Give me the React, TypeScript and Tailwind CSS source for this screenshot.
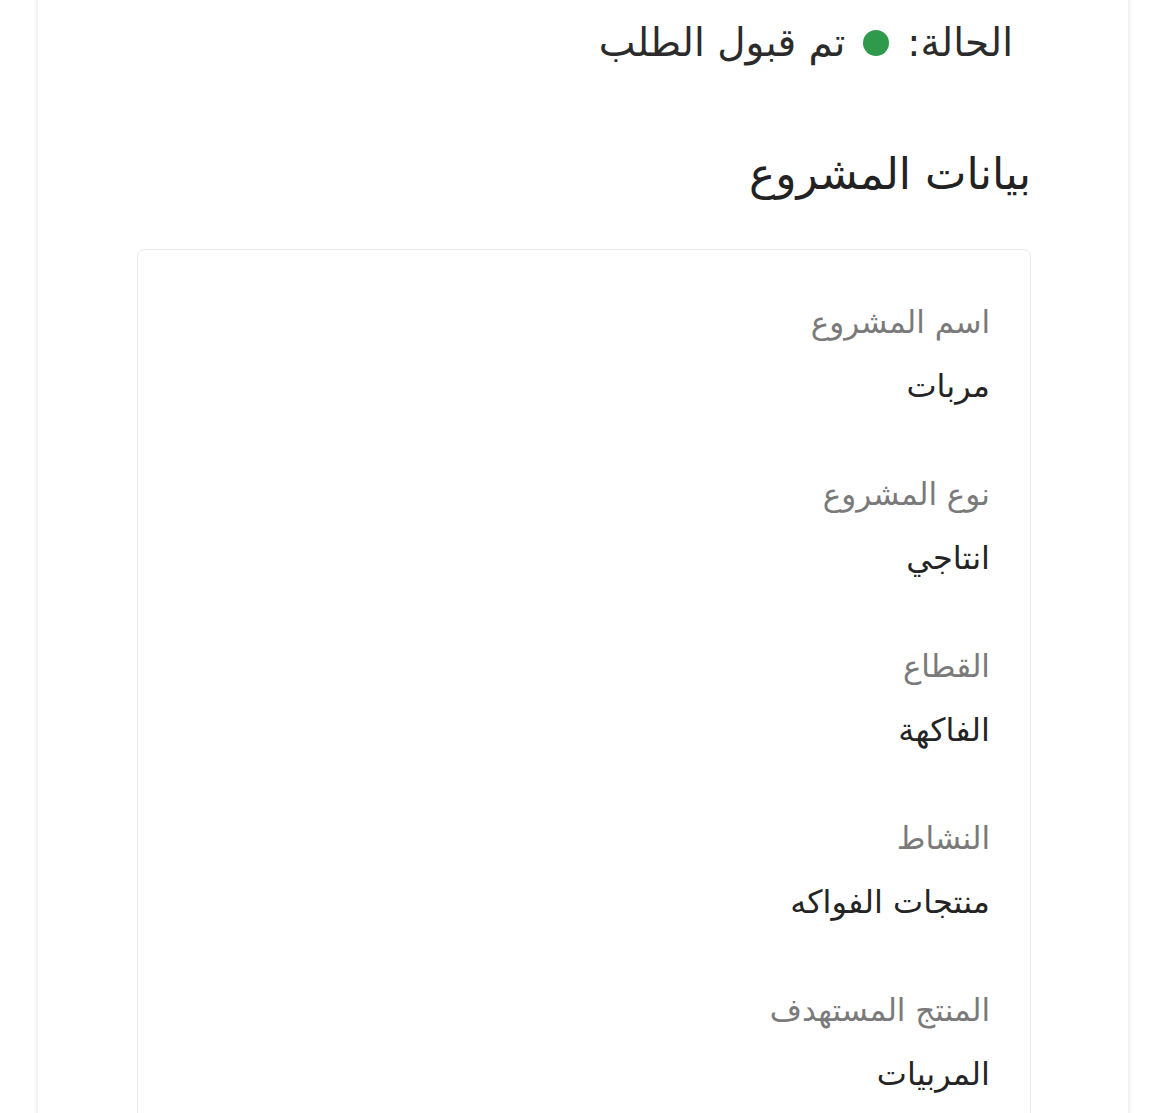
const fields = [
  { label: "اسم المشروع", value: "مربات" },
  { label: "نوع المشروع", value: "انتاجي" },
  { label: "القطاع", value: "الفاكهة" },
  { label: "النشاط", value: "منتجات الفواكه" },
  { label: "المنتج المستهدف", value: "المربيات" },
];

const App = () => {
  return (
    <div
      dir="rtl"
      className="min-h-screen bg-white overflow-hidden"
      style={{ fontFamily: '"DejaVu Sans", "Noto Sans", sans-serif' }}
    >
      <div className="mr-[42px] ml-[38px] -mt-[20px] bg-white shadow-[0_0_6px_rgba(0,0,0,0.12)] pt-[35px] pr-[97px] pl-[99px] pb-[40px]">
        <div className="pr-[18px] flex items-center gap-[18px] text-[39px] leading-[56px] text-[#2b2b2b]">
          <span>الحالة:</span>
          <span className="w-[26px] h-[26px] rounded-full bg-[#2f9a4c] shrink-0" />
          <span>تم قبول الطلب</span>
        </div>

        <h2 className="mt-[72px] text-[44px] leading-[62px] text-[#222]">
          بيانات المشروع
        </h2>

        <div className="mt-[44px] rounded-[8px] border border-[#ebebeb] pt-[50px] pr-[40px] pb-[40px]">
          {fields.map((f, i) => (
            <div key={i} className={i > 0 ? "mt-[63px]" : ""}>
              <p className="text-[31px] leading-[44px] text-[#7a7a7a]">
                {f.label}
              </p>
              <p className="mt-[19px] text-[32px] leading-[46px] text-[#242424]">
                {f.value}
              </p>
            </div>
          ))}
        </div>
      </div>
    </div>
  );
};

export default App;
